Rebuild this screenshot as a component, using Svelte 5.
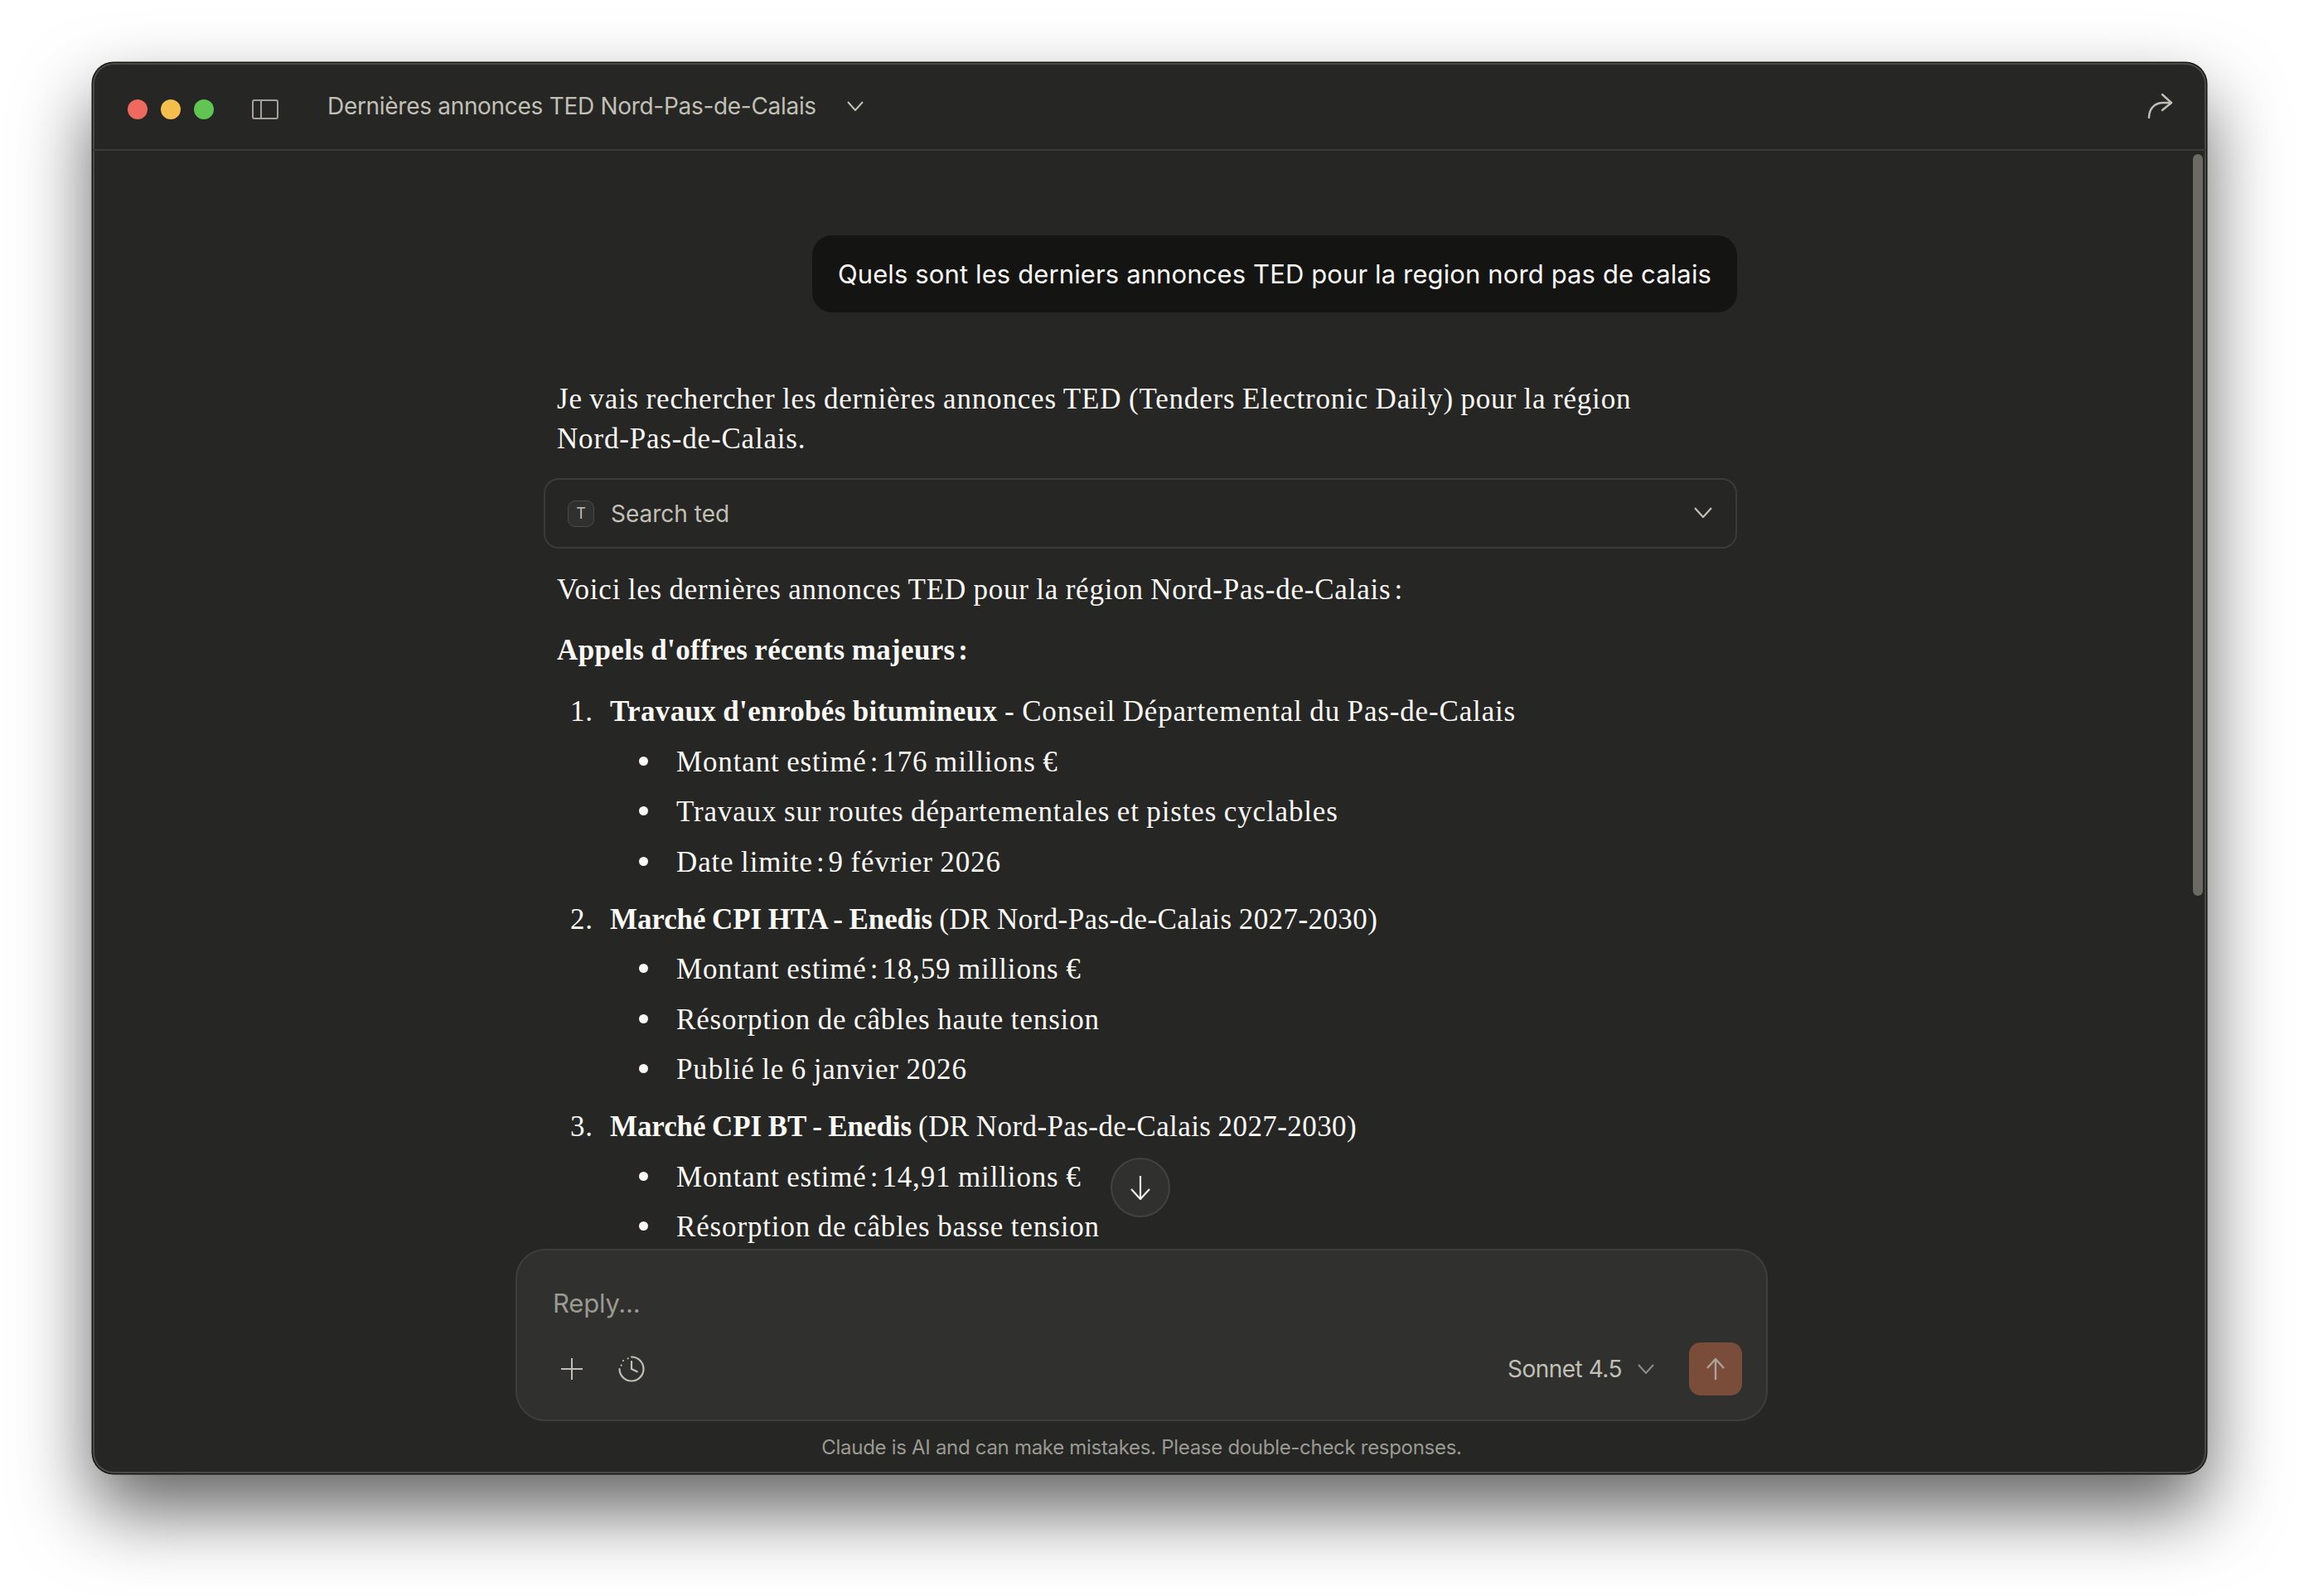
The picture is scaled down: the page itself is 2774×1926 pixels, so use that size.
<script lang="ts">
    const sections = [
        {
            title: "Travaux d'enrobés bitumineux",
            rest: " - Conseil Départemental du Pas-de-Calais",
            narrow: false,
            items: [
                ["Montant estimé", "176 millions €"],
                ["Travaux sur routes départementales et pistes cyclables"],
                ["Date limite", "9 février 2026"],
            ],
        },
        {
            title: "Marché CPI HTA - Enedis",
            rest: " (DR Nord-Pas-de-Calais 2027-2030)",
            narrow: true,
            items: [
                ["Montant estimé", "18,59 millions €"],
                ["Résorption de câbles haute tension"],
                ["Publié le 6 janvier 2026"],
            ],
        },
        {
            title: "Marché CPI BT - Enedis",
            rest: " (DR Nord-Pas-de-Calais 2027-2030)",
            narrow: true,
            items: [
                ["Montant estimé", "14,91 millions €"],
                ["Résorption de câbles basse tension"],
            ],
        },
    ];
</script>

<div class="page">
    <div class="window">
        <header class="titlebar">
            <span class="dot red"></span>
            <span class="dot yellow"></span>
            <span class="dot green"></span>
            <svg class="sidebar-icon" width="32" height="24" viewBox="0 0 32 24" fill="none" stroke="currentColor" stroke-width="2">
                <rect x="1" y="1" width="30" height="22" rx="2" />
                <path d="M11 1v22" />
            </svg>
            <span class="title">Dernières annonces TED Nord-Pas-de-Calais</span>
            <svg class="title-chevron" width="20" height="12" viewBox="0 0 20 12" fill="none" stroke="currentColor" stroke-width="2">
                <path d="M1 1l9 10 9-10" />
            </svg>
            <svg class="share" width="32" height="32" viewBox="0 0 32 32" fill="none" stroke="currentColor" stroke-width="2.4" stroke-linecap="round" stroke-linejoin="round">
                <path d="M3 31C3 20 10 13 20 13h10" />
                <path d="M19 3l11 10-11 9" />
            </svg>
        </header>

        <div class="body">
            <main class="thread">
                <div class="column">
                    <div class="bubble-row">
                        <div class="bubble">Quels sont les derniers annonces TED pour la region nord pas de calais</div>
                    </div>

                    <div class="answer">
                        <p class="intro">Je vais rechercher les dernières annonces TED (Tenders Electronic Daily) pour la région Nord-Pas-de-Calais.</p>

                        <div class="tool">
                            <span class="tool-badge">T</span>
                            <span class="tool-name">Search ted</span>
                            <svg class="tool-chevron" width="22" height="13" viewBox="0 0 22 13" fill="none" stroke="currentColor" stroke-width="2.2">
                                <path d="M1 1l10 11L21 1" />
                            </svg>
                        </div>

                        <p class="lead">Voici les dernières annonces TED pour la région Nord-Pas-de-Calais<span class="colon">{" :"}</span></p>
                        <p class="lead"><strong>Appels d'offres récents majeurs<span class="colon">{" :"}</span></strong></p>

                        <ol>
                            {#each sections as section, i}
                                <li class="section" class:narrow={section.narrow}>
                                    <span class="num">{i + 1}.</span>
                                    <div>
                                        <div><strong>{section.title}</strong><span class="rest">{section.rest}</span></div>
                                        <ul>
                                            {#each section.items as [label, value]}
                                                <li>
                                                    <span class="bullet"></span>
                                                    <span>{label}{#if value}<span class="colon">{" : "}</span>{value}{/if}</span>
                                                </li>
                                            {/each}
                                        </ul>
                                    </div>
                                </li>
                            {/each}
                        </ol>
                    </div>
                </div>

                <button class="to-bottom" aria-label="Scroll to bottom">
                    <svg width="26" height="30" viewBox="0 0 26 30" fill="none" stroke="currentColor" stroke-width="2.2" stroke-linejoin="round">
                        <path d="M13 1v28" />
                        <path d="M2 17l11 12 11-12" />
                    </svg>
                </button>
            </main>

            <div class="scrollbar"></div>

            <footer class="dock">
                <div class="composer">
                    <div class="placeholder">Reply...</div>
                    <div class="tools">
                        <svg class="plus" width="28" height="28" viewBox="0 0 28 28" fill="none" stroke="currentColor" stroke-width="2">
                            <path d="M14 1v26M1 14h26" />
                        </svg>
                        <svg class="history" width="36" height="36" viewBox="0 0 36 36" fill="none" stroke="currentColor" stroke-width="2.2" stroke-linecap="round">
                            <path d="M18 3.5A14.5 14.5 0 1 1 3.5 18" />
                            <path d="M18 9v9l6.7 3.3" />
                            <path d="M13.7 5.3h.01M8 8h.01M5.7 13.7h.01" />
                        </svg>
                        <span class="model">Sonnet 4.5</span>
                        <svg class="model-chevron" width="20" height="12" viewBox="0 0 20 12" fill="none" stroke="currentColor" stroke-width="2">
                            <path d="M1 1l9 10 9-10" />
                        </svg>
                        <button class="send" aria-label="Send">
                            <svg width="24" height="28" viewBox="0 0 24 28" fill="none" stroke="currentColor" stroke-width="2.4" stroke-linejoin="round">
                                <path d="M12 27V2" />
                                <path d="M2 13L12 2l10 11" />
                            </svg>
                        </button>
                    </div>
                </div>
                <div class="disclaimer">Claude is AI and can make mistakes. Please double-check responses.</div>
            </footer>
        </div>
    </div>
</div>

<style>
    :global(body) {
        margin: 0;
        background: #fff;
    }

    .page {
        width: 2774px;
        height: 1926px;
        box-sizing: border-box;
        padding: 76px 112px 0;
        overflow: hidden;
    }

    .window {
        display: flex;
        flex-direction: column;
        height: 1702px;
        border-radius: 25px;
        background: #262624;
        color: #faf9f5;
        box-shadow:
            inset 0 0 0 2px #4a4a47,
            0 0 0 1.5px #161615,
            0 44px 90px rgba(0, 0, 0, 0.62);
        font-family: Inter, "Liberation Sans", sans-serif;
    }

    .titlebar {
        display: flex;
        flex: none;
        align-items: center;
        height: 104px;
        padding: 0 40px 0 42px;
        border-bottom: 2px solid #3b3b38;
        color: #c2c0b6;
    }

    .dot {
        width: 24px;
        height: 24px;
        margin: 8px 16px 0 0;
        border-radius: 50%;
    }

    .red {
        background: #ee6a5f;
    }

    .yellow {
        background: #f5bf4f;
    }

    .green {
        background: #61c554;
        margin-right: 46px;
    }

    .sidebar-icon {
        margin: 8px 59px 0 0;
        color: #a3a29a;
    }

    .title {
        font-size: 28px;
        letter-spacing: -0.3px;
    }

    .title-chevron {
        margin-left: 37px;
    }

    .share {
        margin: -2px 0 0 auto;
    }

    .body {
        position: relative;
        display: flex;
        flex: 1;
        flex-direction: column;
        min-height: 0;
    }

    .thread {
        position: relative;
        flex: 1;
        min-height: 0;
        margin-right: 22px;
        overflow: hidden;
    }

    .column {
        width: 1440px;
        margin: 0 auto;
        padding-top: 102px;
    }

    .bubble-row {
        display: flex;
        justify-content: flex-end;
    }

    .bubble {
        padding: 0 31px;
        height: 93px;
        line-height: 93px;
        border-radius: 24px;
        background: #141413;
        font-size: 31px;
        letter-spacing: 0.12px;
    }

    .answer {
        padding-top: 81px;
        font-family: "Liberation Serif", serif;
        font-size: 35px;
        line-height: 48px;
        letter-spacing: 0.85px;
        word-spacing: -1px;
    }

    strong {
        letter-spacing: 0.35px;
    }

    .colon {
        word-spacing: -5.5px;
    }

    .narrow strong {
        letter-spacing: -0.1px;
    }

    .narrow .rest {
        letter-spacing: 0.42px;
    }

    p {
        margin: 0;
        padding: 0 16px;
    }

    .intro {
        padding-right: 90px;
        letter-spacing: 0.82px;
    }

    .lead {
        letter-spacing: 0.78px;
    }

    .tool {
        display: flex;
        align-items: center;
        height: 85px;
        box-sizing: border-box;
        margin: 23px 0 26px;
        padding: 0 28px 0 27px;
        border: 2px solid #3b3b38;
        border-radius: 18px;
        font-family: Inter, "Liberation Sans", sans-serif;
        letter-spacing: 0;
        word-spacing: 0;
        color: #c2c0b6;
    }

    .tool-badge {
        display: flex;
        align-items: center;
        justify-content: center;
        width: 32px;
        height: 32px;
        box-sizing: border-box;
        border: 1.5px solid #4a4a46;
        border-radius: 9px;
        background: #30302e;
        font-size: 18px;
    }

    .tool-name {
        margin-left: 20px;
        font-size: 28px;
    }

    .tool-chevron {
        margin: -2px 0 0 auto;
    }

    .lead + .lead {
        margin-top: 25px;
    }

    ol,
    ul {
        margin: 0;
        padding: 0;
        list-style: none;
    }

    ol {
        margin-top: 26px;
    }

    .section {
        display: grid;
        grid-template-columns: 80px 1fr;
    }

    .section + .section {
        margin-top: 21px;
    }

    .num {
        padding-left: 32px;
    }

    ul li {
        display: grid;
        grid-template-columns: 80px 1fr;
        margin-top: 12.5px;
    }

    .bullet {
        width: 11px;
        height: 11px;
        margin: 17px 0 0 35px;
        border-radius: 50%;
        background: #faf9f5;
    }

    .to-bottom {
        position: absolute;
        bottom: 38px;
        left: 50%;
        display: flex;
        align-items: center;
        justify-content: center;
        width: 72px;
        height: 72px;
        margin-left: -36px;
        padding: 0;
        border: 2px solid #42423e;
        border-radius: 50%;
        background: #30302e;
        color: #f0efe9;
    }

    .scrollbar {
        position: absolute;
        top: 4px;
        right: 4px;
        width: 12px;
        height: 895px;
        border-radius: 6px;
        background: #6b6b64;
    }

    .dock {
        flex: none;
        padding-right: 19px;
    }

    .composer {
        width: 1511px;
        box-sizing: border-box;
        margin: 0 auto;
        padding: 40px 29px 29px 43px;
        border: 2px solid #3e3e3b;
        border-radius: 36px;
        background: #30302e;
    }

    .placeholder {
        font-size: 31px;
        line-height: 48px;
        letter-spacing: -0.2px;
        color: #9a9a93;
    }

    .tools {
        display: flex;
        align-items: center;
        margin-top: 23px;
        color: #c2c0b6;
    }

    .plus {
        margin-left: 9px;
    }

    .history {
        margin-left: 40px;
    }

    .model {
        margin-left: auto;
        font-size: 28px;
        letter-spacing: -0.5px;
    }

    .model-chevron {
        margin: 0 42px 0 19px;
        color: #8e8d85;
    }

    .send {
        display: flex;
        align-items: center;
        justify-content: center;
        width: 64px;
        height: 64px;
        padding: 0;
        border: none;
        border-radius: 14px;
        background: #7a4d3b;
        color: #aaa49b;
    }

    .disclaimer {
        height: 63px;
        font-size: 24px;
        line-height: 64px;
        letter-spacing: -0.3px;
        text-align: center;
        color: #9a9a93;
    }
</style>
